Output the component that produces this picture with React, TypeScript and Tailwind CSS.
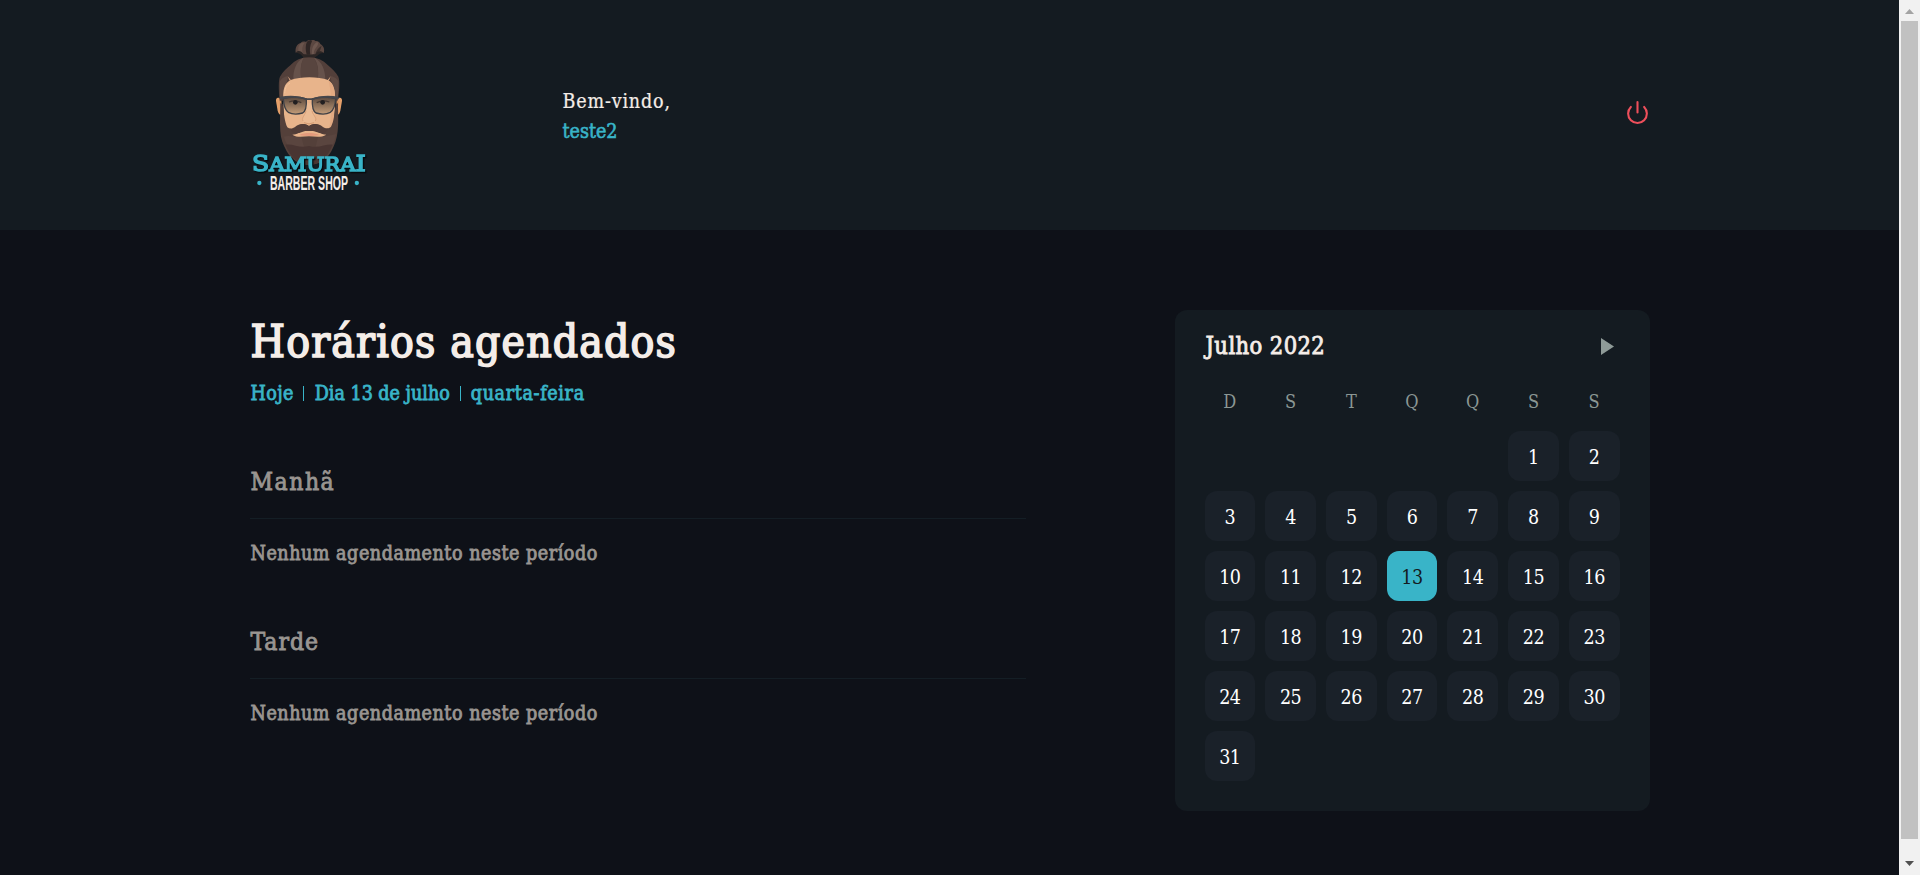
import React from "react";

const WEEKDAYS = ["D", "S", "T", "Q", "Q", "S", "S"];
const FIRST_WEEKDAY = 5;
const DAYS = Array.from({ length: 31 }, (_, i) => i + 1);
const TODAY = 13;

function Logo() {
  return (
    <svg viewBox="60 51 360 480" className="mt-[4px] h-[160px] w-[120px] shrink-0 overflow-visible" role="img">
      <defs>
        <linearGradient id="lens" x1="0" y1="0" x2="0" y2="1">
          <stop offset="0" stopColor="#5b4a3f" />
          <stop offset="1" stopColor="#c39c78" />
        </linearGradient>
      </defs>
      {/* top knot */}
      <path d="M197 98C195 84 200 72 212 69C216 64 224 64 228 66C232 60 238 60 242 62C246 59 254 60 256 63C264 62 270 67 271 72C281 78 285 88 281 99C273 97 264 98 258 106H220C215 98 206 96 197 98Z" fill="#5b4741" />
      <path d="M230 104C226 88 226 76 231 65C240 60 244 62 246 64C240 76 238 90 241 104Z" fill="#2f2625" />
      <path d="M246 104C244 86 250 72 262 66C266 70 264 76 259 82C252 90 251 96 252 104Z" fill="#6e5850" />
      <path d="M213 70C205 76 203 86 206 95C212 96 215 98 219 102C215 90 216 78 224 68Z" fill="#6a544c" />
      <path d="M256 102C260 90 266 82 275 77C272 86 270 92 266 98Z" fill="#3a2e2b" />
      <path d="M197 98C203 90 214 92 220 102C222 104 254 104 257 102C263 92 274 91 281 99C274 99 268 101 262 107L254 113H221L214 105C209 100 204 99 197 98Z" fill="#2c2625" />
      {/* ears */}
      <path d="M154 238C144 229 137 233 138 243L143 272C145 281 150 286 156 285Z" fill="#e5a06a" />
      <path d="M320 238C330 229 337 233 336 243L331 272C329 281 325 286 318 285Z" fill="#e5a06a" />
      <path d="M150 243L153 276M324 243L321 276" stroke="#c98654" strokeWidth="3" />
      {/* hair */}
      <path d="M149 242C146 210 145 180 150 170C159 154 171 145 181 136C196 120 213 112 237 112C261 112 279 120 294 136C305 146 318 157 325 170C330 182 328 212 323 242Z" fill="#523f3a" />
      <path d="M218 114C198 126 190 150 190 178L213 174C211 150 212 128 222 113Z" fill="#66524b" />
      <path d="M255 114C276 126 286 150 286 180L264 174C266 150 264 128 251 113Z" fill="#66524b" />
      <path d="M222 113C211 132 211 154 214 176H263C266 154 264 132 251 113Z" fill="#58453f" />
      <path d="M150 184C156 172 166 170 174 168L162 232L150 236ZM325 184C319 172 309 170 301 168L314 232L324 236Z" fill="#5f4a43" />
      {/* face */}
      <path d="M160 242C158 212 162 190 182 180C212 169 264 169 294 180C312 190 317 214 315 244L311 318C306 350 270 364 237 364C206 364 168 350 162 318Z" fill="#e8b48b" />
      <path d="M296 184C312 194 316 214 315 244L311 322L296 334C304 300 309 240 296 184Z" fill="#e3aa82" />
      <path d="M173 169L180 183L182 179ZM302 169L296 183L294 179Z" fill="#e8b48b" />
      <path d="M164 220C165 202 170 194 180 190" stroke="#f1c39d" strokeWidth="3" fill="none" />
      {/* nose */}
      <path d="M228 250C226 278 213 290 217 302C222 312 252 312 257 302C261 290 249 278 246 250Z" fill="#ebbb94" />
      <path d="M228 272C227 284 213 292 219 303M246 272C247 284 262 292 256 303" stroke="#d9a078" strokeWidth="3" fill="none" />
      <path d="M222 308Q237 315 252 308" stroke="#d59b72" strokeWidth="3" fill="none" />
      {/* beard */}
      <path d="M151 250L158 252C162 282 164 306 172 322C180 328 188 326 196 320C208 310 224 310 237 318C250 310 266 310 278 320C288 327 296 326 303 320C312 304 314 280 317 252L324 250C324 280 326 312 323 334C321 356 314 376 304 394C290 420 268 434 237 435C208 434 184 420 170 394C159 374 152 356 151 334C149 304 151 278 151 250Z" fill="#54403a" />
      <path d="M162 350C180 344 196 354 214 350L222 380L204 404C182 390 168 374 162 350ZM318 342C300 346 282 352 264 350L256 384L280 410C302 390 314 370 318 342Z" fill="#5a453f" />
      <path d="M166 374C192 370 206 386 237 378C266 386 286 372 308 374C290 416 268 434 237 435C208 434 184 416 166 374Z" fill="#493532" />
      {/* mouth and mustache */}
      <path d="M187 344C202 344 208 336 222 331H254C268 336 274 344 289 344C272 354 256 349 237 349C218 349 202 354 187 344Z" fill="#e8b48b" />
      <path d="M208 345C222 337 252 337 268 345C250 349 226 349 208 345Z" fill="#e39a7c" />
      <path d="M237 319C224 308 208 312 200 321C195 327 188 329 181 326C184 338 200 344 214 337C224 332 228 333 237 333C246 333 252 332 262 337C276 344 290 338 294 326C287 329 280 327 275 321C266 312 250 308 237 319Z" fill="#523d38" />
      {/* glasses */}
      <path d="M160 236C180 230 208 230 229 237C230 256 226 274 218 279C204 283 186 283 175 277C166 270 161 254 160 236ZM247 237C268 230 296 230 317 236C316 254 310 270 301 277C290 283 272 283 258 279C250 274 246 256 247 237Z" fill="url(#lens)" />
      <path d="M177 246Q196 238 214 248M260 248Q278 238 298 246" stroke="#463932" strokeWidth="4" fill="none" />
      <circle cx="196" cy="247" r="7" fill="#211f20" />
      <circle cx="278" cy="247" r="7" fill="#211f20" />
      <path d="M160 236C180 230 208 230 229 237C230 256 226 274 218 279C204 283 186 283 175 277C166 270 161 254 160 236ZM247 237C268 230 296 230 317 236C316 254 310 270 301 277C290 283 272 283 258 279C250 274 246 256 247 237Z" fill="none" stroke="#3f4045" strokeWidth="4" />
      <path d="M150 230C178 225 206 226 229 235H247C270 226 298 225 326 230V238C298 231 270 231 248 240H228C206 231 178 231 150 238Z" fill="#45464b" />
      {/* wordmark */}
      <text
        x="66"
        y="452"
        fontFamily="'DejaVu Serif', serif"
        fontSize="57"
        fill="#39b4c8"
        stroke="#39b4c8"
        strokeWidth="4.5"
        textLength="341"
        lengthAdjust="spacingAndGlyphs"
        className="[filter:drop-shadow(4px_4px_2px_#06090c)]"
      >
        <tspan fontSize="67">S</tspan>AMURA<tspan fontSize="67">I</tspan>
      </text>
      <text x="120" y="510" fontFamily="'Liberation Sans', sans-serif" fontWeight="700" fontSize="58" fill="#f4ede8" textLength="234" lengthAdjust="spacingAndGlyphs">BARBER SHOP</text>
      <circle cx="88" cy="489" r="6.5" fill="#39b4c8" />
      <circle cx="380.5" cy="489" r="6.5" fill="#39b4c8" />
    </svg>
  );
}

function PowerIcon() {
  return (
    <svg viewBox="0 0 24 24" className="size-[25px]" fill="none" stroke="#ee4f5b" strokeWidth="2" strokeLinecap="round" strokeLinejoin="round">
      <path d="M18.36 6.64a9 9 0 1 1-12.73 0" />
      <path d="M12 2v10" />
    </svg>
  );
}

function Header() {
  return (
    <header className="flex h-[230px] justify-center bg-[#141b21]">
      <div className="flex w-[1400px] items-center">
        <Logo />
        <div className="ml-[193px] flex flex-col pt-[4px] text-[19.5px] leading-[30px]">
          <span className="tracking-[0.83px] text-[#f4ede8] [-webkit-text-stroke:0.2px]">Bem-vindo,</span>
          <span className="text-[#39b4c8] [-webkit-text-stroke:0.6px]">teste2</span>
        </div>
        <button className="mb-[5px] ml-auto" aria-label="Sair">
          <PowerIcon />
        </button>
      </div>
    </header>
  );
}

function Period({ title, spacing }: { title: string; spacing: string }) {
  return (
    <section className="text-[#999591] [-webkit-text-stroke:0.8px]">
      <h2 className={`h-[58px] border-b border-[#141e25] pt-px pl-px text-[24.5px] leading-[40px] ${spacing}`}>{title}</h2>
      <p className="mt-[22px] h-[25px] pl-px text-[19.5px] leading-[26px] tracking-[0.54px]">Nenhum agendamento neste período</p>
    </section>
  );
}

function Calendar() {
  return (
    <aside className="h-[501px] w-[475px] rounded-[12px] bg-[#141b21] px-[30px] pt-[21px]">
      <div className="flex h-[30px] items-center justify-between">
        <span className="pt-[2px] pl-px text-[23.5px] tracking-[0.4px] text-[#f4ede8] [-webkit-text-stroke:0.8px]">Julho 2022</span>
        <svg viewBox="0 0 13 17" className="mr-[6px] h-[17px] w-[13px]">
          <path d="M0 0L13 8.5L0 17Z" fill="#8f9b98" />
        </svg>
      </div>
      <div className="mt-[29px] grid grid-cols-7 gap-x-[10px] text-center text-[18px] leading-[24px] text-[#8b9794]">
        {WEEKDAYS.map((d, i) => (
          <span key={i}>{d}</span>
        ))}
      </div>
      <div className="mt-[17px] grid grid-cols-7 gap-[10px]">
        {Array.from({ length: FIRST_WEEKDAY }, (_, i) => (
          <span key={`blank-${i}`} />
        ))}
        {DAYS.map((day) => (
          <button
            key={day}
            className={`h-[50px] rounded-[12px] pt-[3px] text-[19.5px] leading-[47px] tracking-[-0.5px] ${
              day === TODAY ? "bg-[#39b4c8] text-[#141b21]" : "bg-[#1a2129] text-white"
            }`}
          >
            {day}
          </button>
        ))}
      </div>
    </aside>
  );
}

function Scrollbar() {
  return (
    <div className="flex w-[21px] flex-col items-center bg-[#f1f1f1]">
      <svg viewBox="0 0 9 5" className="mt-[9px] h-[5px] w-[9px] shrink-0">
        <path d="M4.5 0L9 5H0Z" fill="#a3a3a3" />
      </svg>
      <div className="mt-[7px] h-[818px] w-[17px] shrink-0 bg-[#c1c1c1]" />
      <svg viewBox="0 0 9 5" className="mt-[22px] h-[5px] w-[9px] shrink-0">
        <path d="M0 0H9L4.5 5Z" fill="#505050" />
      </svg>
    </div>
  );
}

export default function App() {
  return (
    <div className="flex h-[875px] overflow-hidden bg-[#0e1118] font-['DejaVu_Serif_Condensed','DejaVu_Serif',serif]">
      <div className="flex-1">
        <Header />
        <main className="mx-auto flex w-[1400px] justify-between pt-[80px]">
          <div className="w-[776px]">
            <h1 className="pt-[2px] pl-px text-[44px] leading-[60px] tracking-[1.18px] text-[#f4ede8] [-webkit-text-stroke:1.6px]">
              Horários agendados
            </h1>
            <p className="mt-[9px] flex items-center pl-px text-[19.5px] leading-[26px] text-[#39b4c8] [-webkit-text-stroke:0.8px]">
              <span className="tracking-[0.4px]">Hoje</span>
              <i className="mb-[2px] ml-[9px] h-[15px] w-px bg-[#39b4c8]" />
              <span className="ml-[11px]">Dia 13 de julho</span>
              <i className="mb-[2px] ml-[10px] h-[15px] w-px bg-[#39b4c8]" />
              <span className="ml-[10px] tracking-[0.66px]">quarta-feira</span>
            </p>
            <div className="mt-[54px] flex flex-col gap-[55px]">
              <Period title="Manhã" spacing="tracking-[1.5px]" />
              <Period title="Tarde" spacing="tracking-[1px]" />
            </div>
          </div>
          <Calendar />
        </main>
      </div>
      <Scrollbar />
    </div>
  );
}
